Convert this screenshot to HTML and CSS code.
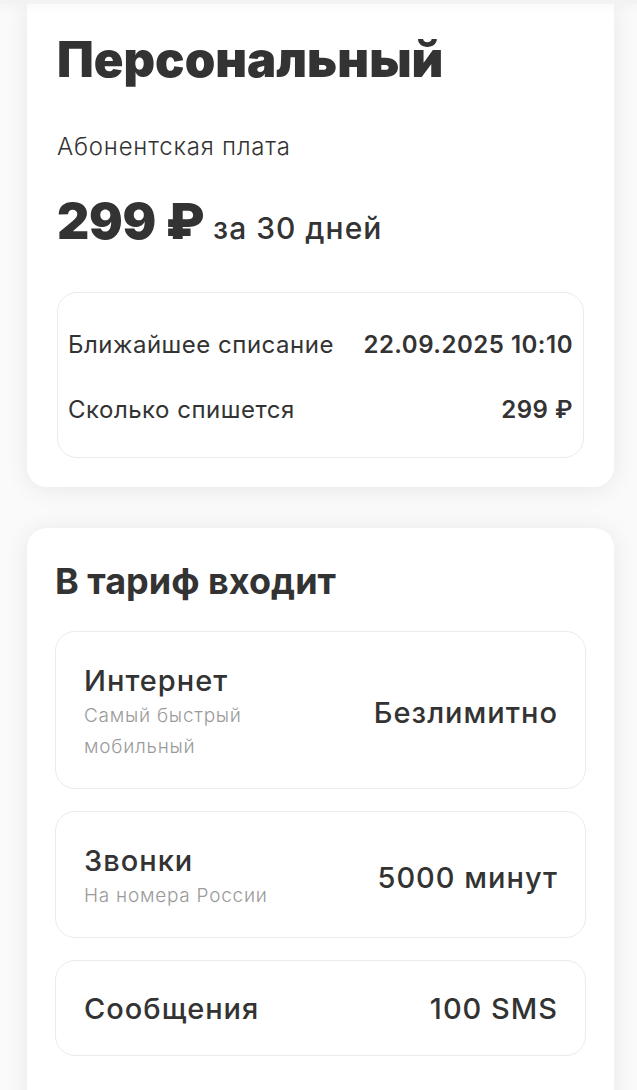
FILE: index.html
```html
<!DOCTYPE html>
<html lang="ru">
<head>
  <meta charset="UTF-8" />
  <title>Персональный</title>
  <meta name="viewport" content="width=device-width, initial-scale=1.0" />
  <link rel="stylesheet" href="styles.css">
</head>
<body>

  <div class="top-bar"></div>

  <div class="card card-tariff">
    <h1 class="tariff-name">Персональный</h1>

    <div class="fee-label">Абонентская плата</div>
    <div class="fee-row">
      <span class="fee-price">299 ₽</span>
      <span class="fee-period">за 30 дней</span>
    </div>

    <div class="charge-box">
      <div class="charge-row">
        <span class="charge-label">Ближайшее списание</span>
        <span class="charge-value">22.09.2025 10:10</span>
      </div>
      <div class="charge-row">
        <span class="charge-label">Сколько спишется</span>
        <span class="charge-value">299 ₽</span>
      </div>
    </div>
  </div>

  <div class="card card-includes">
    <h2 class="section-title">В тариф входит</h2>

    <div class="option">
      <div class="option-info">
        <div class="option-name">Интернет</div>
        <div class="option-note">Самый быстрый<br>мобильный</div>
      </div>
      <div class="option-value">Безлимитно</div>
    </div>

    <div class="option">
      <div class="option-info">
        <div class="option-name">Звонки</div>
        <div class="option-note">На номера России</div>
      </div>
      <div class="option-value">5000 минут</div>
    </div>

    <div class="option option-single">
      <div class="option-info">
        <div class="option-name">Сообщения</div>
      </div>
      <div class="option-value">100 SMS</div>
    </div>
  </div>

</body>
</html>
```

FILE: styles.css
```css
:root {
  --bg: #fafafa;
  --card: #ffffff;
  --fg: #333333;
  --muted: #9a9a9a;
  --line: #ebebeb;
}

body {
  font-family: Inter, Roboto, "Liberation Sans", sans-serif;
  background-color: var(--bg);
  color: var(--fg);
  margin: 0;
  padding: 4px 23px 0 27px;
}

.top-bar {
  position: fixed;
  top: 0;
  left: 0;
  right: 0;
  height: 4px;
  background-color: #f3f3f3;
  box-shadow: 0 2px 10px rgba(0, 0, 0, 0.06);
  z-index: 2;
}

.card {
  background-color: var(--card);
  border-radius: 20px;
  box-shadow: 0 2px 24px rgba(0, 0, 0, 0.08);
}

.card-tariff {
  border-radius: 0 0 20px 20px;
  padding: 28px 30px 29px;
}

.card-includes {
  margin-top: 41px;
  padding: 31px 28px 40px;
}

.tariff-name {
  margin: 0;
  font-size: 49px;
  line-height: 56px;
  font-weight: 900;
}

.fee-label {
  margin-top: 45px;
  font-size: 24px;
  line-height: 28px;
  font-weight: 300;
  letter-spacing: 0.8px;
}

.fee-row {
  display: flex;
  align-items: baseline;
  gap: 9px;
  margin-top: 31px;
}

.fee-price {
  font-size: 50px;
  line-height: 58px;
  font-weight: 900;
  letter-spacing: -0.3px;
}

.fee-period {
  font-size: 30px;
  font-weight: 500;
  letter-spacing: 1px;
}

.charge-box {
  margin-top: 42px;
  border: 1px solid var(--line);
  border-radius: 20px;
  padding: 38px 10px 33px;
  display: flex;
  flex-direction: column;
  gap: 37px;
}

.charge-row {
  display: flex;
  justify-content: space-between;
  align-items: baseline;
  font-size: 24px;
  line-height: 28px;
  letter-spacing: 0.5px;
}

.charge-value {
  font-weight: 600;
}

.section-title {
  margin: 0 0 28px;
  font-size: 36px;
  line-height: 44px;
  font-weight: 700;
}

.option {
  display: flex;
  justify-content: space-between;
  align-items: center;
  border: 1px solid var(--line);
  border-radius: 20px;
  padding: 32px 27px 26px 28px;
  margin-bottom: 22px;
}

.option-single {
  padding: 31px 27px 29px 28px;
}

.option-name,
.option-value {
  font-size: 29px;
  line-height: 34px;
  font-weight: 500;
  letter-spacing: 1px;
}

.option-note {
  margin-top: 2px;
  font-size: 19px;
  line-height: 31px;
  font-weight: 300;
  letter-spacing: 0.75px;
  color: var(--muted);
}
```
